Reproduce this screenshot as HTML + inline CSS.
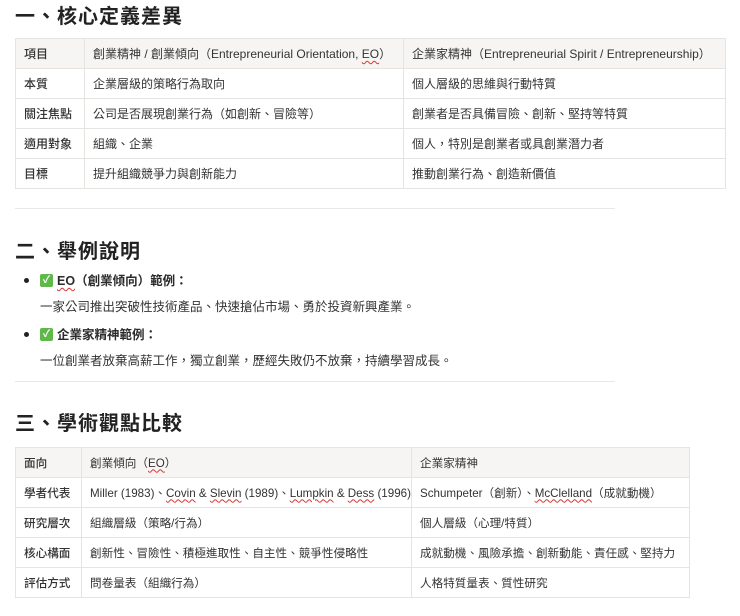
<!DOCTYPE html>
<html><head><meta charset="utf-8"><style>
*{margin:0;padding:0;box-sizing:border-box}
body{width:740px;height:616px;background:#fff;font-family:"Liberation Sans","Noto Sans CJK TC",sans-serif;color:#2b2b2b;position:relative;overflow:hidden}
h2{position:absolute;left:15px;font-size:20px;font-weight:bold;color:#222;letter-spacing:1px}
table{position:absolute;border-collapse:collapse;font-size:12px;color:#333;table-layout:fixed}
td{border:1px solid #e6e4e0;height:30px;padding:0 2px 0 8px;vertical-align:middle;white-space:nowrap;overflow:hidden}
tr:first-child td{background:#f6f5f3}
td:first-child{font-weight:500}
.t2{font-size:11.6px}
.hr{position:absolute;left:15px;width:600px;height:1px;background:#e8e8e8}
.w{text-decoration:underline wavy #d33;text-decoration-thickness:1px;text-underline-offset:2px}
.li{position:absolute;left:22px;font-size:12.5px;font-weight:bold}
.li::before{content:"";position:absolute;left:2px;top:8px;width:5px;height:5px;border-radius:50%;background:#222}
.ck{display:inline-block;width:13px;height:13px;background:#5fb84a;border-radius:2px;color:#fff;font-size:10px;text-align:center;line-height:13px;vertical-align:middle;margin-right:4px;position:relative;top:-1px}
.sub{position:absolute;left:40px;font-size:12.5px;color:#333}
</style></head><body>
<h2 style="top:0px">一、核心定義差異</h2>
<table style="left:15px;top:38px;width:711px">
<colgroup><col style="width:69px"><col style="width:319px"><col></colgroup>
<tr><td>項目</td><td>創業精神 / 創業傾向（Entrepreneurial Orientation, <span class="w">EO</span>）</td><td>企業家精神（Entrepreneurial Spirit / Entrepreneurship）</td></tr>
<tr><td>本質</td><td>企業層級的策略行為取向</td><td>個人層級的思維與行動特質</td></tr>
<tr><td>關注焦點</td><td>公司是否展現創業行為（如創新、冒險等）</td><td>創業者是否具備冒險、創新、堅持等特質</td></tr>
<tr><td>適用對象</td><td>組織、企業</td><td>個人，特別是創業者或具創業潛力者</td></tr>
<tr><td>目標</td><td>提升組織競爭力與創新能力</td><td>推動創業行為、創造新價值</td></tr>
</table>
<div class="hr" style="top:208px"></div>
<h2 style="top:235px">二、舉例說明</h2>
<div class="li" style="top:270px"><span style="padding-left:18px"><span class="ck">✓</span><span class="w">EO</span>（創業傾向）範例：</span></div>
<div class="sub" style="top:296px">一家公司推出突破性技術產品、快速搶佔市場、勇於投資新興產業。</div>
<div class="li" style="top:324px"><span style="padding-left:18px"><span class="ck">✓</span>企業家精神範例：</span></div>
<div class="sub" style="top:350px">一位創業者放棄高薪工作，獨立創業，歷經失敗仍不放棄，持續學習成長。</div>
<div class="hr" style="top:381px"></div>
<h2 style="top:407px">三、學術觀點比較</h2>
<table class="t2" style="left:15px;top:447px;width:675px">
<colgroup><col style="width:66px"><col style="width:330px"><col></colgroup>
<tr><td>面向</td><td>創業傾向（<span class="w">EO</span>）</td><td>企業家精神</td></tr>
<tr><td>學者代表</td><td>Miller (1983)、<span class="w">Covin</span> &amp; <span class="w">Slevin</span> (1989)、<span class="w">Lumpkin</span> &amp; <span class="w">Dess</span> (1996)</td><td>Schumpeter（創新）、<span class="w">McClelland</span>（成就動機）</td></tr>
<tr><td>研究層次</td><td>組織層級（策略/行為）</td><td>個人層級（心理/特質）</td></tr>
<tr><td>核心構面</td><td>創新性、冒險性、積極進取性、自主性、競爭性侵略性</td><td>成就動機、風險承擔、創新動能、責任感、堅持力</td></tr>
<tr><td>評估方式</td><td>問卷量表（組織行為）</td><td>人格特質量表、質性研究</td></tr>
</table>
</body></html>
